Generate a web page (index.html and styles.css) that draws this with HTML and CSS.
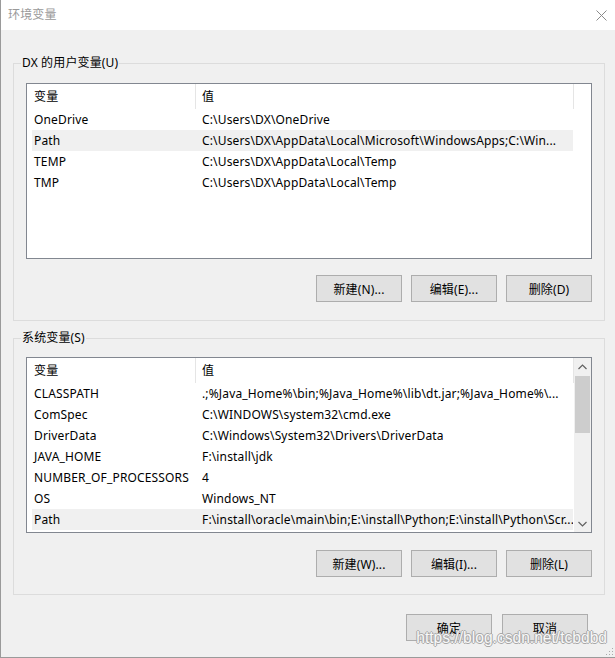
FILE: index.html
```html
<!DOCTYPE html>
<html lang="zh-CN">
<head>
    <meta charset="UTF-8">
    <title>环境变量</title>
    <link rel="stylesheet" href="styles.css">
</head>
<body>

<div class="window">
    <div class="titlebar">
        <span class="title">环境变量</span>
        <svg class="close" width="11" height="11" viewBox="0 0 11 11">
            <path d="M0.5 0.5 L10.5 10.5 M10.5 0.5 L0.5 10.5" stroke="#8a8a8a" stroke-width="1" fill="none"/>
        </svg>
    </div>

    <div class="content">
        <fieldset class="group group-user">
            <legend>DX 的用户变量(U)</legend>
            <div class="list">
                <div class="list-main">
                    <div class="list-head">
                        <div class="head-cell head-name">变量</div>
                        <div class="head-cell head-value">值</div>
                        <div class="head-fill"></div>
                    </div>
                    <div class="rows">
                        <div class="row"><span class="cell-name">OneDrive</span><span class="cell-value">C:\Users\DX\OneDrive</span></div>
                        <div class="row selected"><span class="cell-name">Path</span><span class="cell-value">C:\Users\DX\AppData\Local\Microsoft\WindowsApps;C:\Win...</span></div>
                        <div class="row"><span class="cell-name">TEMP</span><span class="cell-value">C:\Users\DX\AppData\Local\Temp</span></div>
                        <div class="row"><span class="cell-name">TMP</span><span class="cell-value">C:\Users\DX\AppData\Local\Temp</span></div>
                    </div>
                </div>
            </div>
            <div class="buttons">
                <button>新建(N)...</button>
                <button>编辑(E)...</button>
                <button>删除(D)</button>
            </div>
        </fieldset>

        <fieldset class="group group-system">
            <legend>系统变量(S)</legend>
            <div class="list">
                <div class="list-main">
                    <div class="list-head">
                        <div class="head-cell head-name">变量</div>
                        <div class="head-cell head-value">值</div>
                    </div>
                    <div class="rows">
                        <div class="row"><span class="cell-name">CLASSPATH</span><span class="cell-value">.;%Java_Home%\bin;%Java_Home%\lib\dt.jar;%Java_Home%\...</span></div>
                        <div class="row"><span class="cell-name">ComSpec</span><span class="cell-value">C:\WINDOWS\system32\cmd.exe</span></div>
                        <div class="row"><span class="cell-name">DriverData</span><span class="cell-value">C:\Windows\System32\Drivers\DriverData</span></div>
                        <div class="row"><span class="cell-name">JAVA_HOME</span><span class="cell-value">F:\install\jdk</span></div>
                        <div class="row"><span class="cell-name">NUMBER_OF_PROCESSORS</span><span class="cell-value">4</span></div>
                        <div class="row"><span class="cell-name">OS</span><span class="cell-value">Windows_NT</span></div>
                        <div class="row selected"><span class="cell-name">Path</span><span class="cell-value">F:\install\oracle\main\bin;E:\install\Python;E:\install\Python\Scr...</span></div>
                    </div>
                </div>
                <div class="scrollbar">
                    <div class="arrow">
                        <svg width="9" height="6" viewBox="0 0 9 6"><path d="M0.5 5 L4.5 1 L8.5 5" stroke="#606060" stroke-width="1.2" fill="none"/></svg>
                    </div>
                    <div class="track">
                        <div class="thumb"></div>
                    </div>
                    <div class="arrow">
                        <svg width="9" height="6" viewBox="0 0 9 6"><path d="M0.5 1 L4.5 5 L8.5 1" stroke="#606060" stroke-width="1.2" fill="none"/></svg>
                    </div>
                </div>
            </div>
            <div class="buttons">
                <button>新建(W)...</button>
                <button>编辑(I)...</button>
                <button>删除(L)</button>
            </div>
        </fieldset>

        <div class="footer">
            <button>确定</button>
            <button>取消</button>
        </div>
    </div>

    <div class="watermark">https://blog.csdn.net/tcbdbd</div>
    <div class="grip"></div>
</div>

</body>
</html>
```

FILE: styles.css
```css
body {
    margin: 0;
    padding: 0;
    background: #f0f0f0;
    font-family: "Noto Sans", "Noto Sans CJK SC", sans-serif;
    font-size: 12px;
    letter-spacing: 0.15px;
    color: #000;
}

.window {
    position: relative;
    width: 615px;
    height: 658px;
    box-sizing: border-box;
    background: #f0f0f0;
    border-left: 1px solid #9a9a9a;
    border-bottom: 1px solid #9a9a9a;
    overflow: hidden;
}

.titlebar {
    height: 30px;
    background: #fff;
    display: flex;
    align-items: center;
    justify-content: space-between;
    padding: 0 8px 0 7px;
}

.titlebar .title {
    color: #999;
    line-height: 16px;
}

.titlebar .close {
    display: block;
}

.content {
    padding-top: 25px;
}

.group {
    margin: 0 10px 0 12px;
    padding: 12px 12px 18px 12px;
    border: 1px solid #dcdcdc;
    min-width: 0;
}

.group legend {
    margin-left: -5px;
    padding: 0 1px;
    line-height: 16px;
}

.group-system {
    margin-top: 9px;
    padding-top: 11px;
    padding-bottom: 17px;
}

.list {
    height: 176px;
    box-sizing: border-box;
    border: 1px solid #828790;
    background: #fff;
    display: flex;
    overflow: hidden;
}

.list-main {
    flex: 1;
    min-width: 0;
}

.list-head {
    display: flex;
    height: 25px;
}

.head-cell {
    line-height: 25px;
    box-sizing: border-box;
    border-right: 1px solid #e5e5e5;
}

.head-name {
    width: 169px;
    padding-left: 7px;
}

.head-value {
    width: 378px;
    padding-left: 6px;
}

.head-fill {
    flex: 1;
}

.rows {
    width: 541px;
    margin-left: 5px;
}

.row {
    display: flex;
    height: 21px;
    line-height: 21px;
    white-space: nowrap;
}

.row.selected {
    background: #f0f0f0;
}

.cell-name {
    width: 164px;
    box-sizing: border-box;
    padding-left: 2px;
    overflow: hidden;
}

.cell-value {
    flex: 1;
    padding-left: 6px;
    overflow: hidden;
}

.scrollbar {
    width: 17px;
    background: #f0f0f0;
    display: flex;
    flex-direction: column;
}

.scrollbar .arrow {
    height: 17px;
    display: flex;
    align-items: center;
    justify-content: center;
}

.scrollbar .track {
    flex: 1;
    padding: 1px 1px 0 1px;
}

.scrollbar .thumb {
    height: 57px;
    background: #cdcdcd;
}

.buttons {
    display: flex;
    justify-content: flex-end;
    gap: 9px;
    margin-top: 16px;
}

.group-system .buttons {
    margin-top: 17px;
}

button {
    width: 86px;
    height: 27px;
    background: #e1e1e1;
    border: 1px solid #adadad;
    font-family: inherit;
    font-size: 12px;
    letter-spacing: inherit;
    color: #000;
    padding: 0;
}

.footer {
    display: flex;
    justify-content: flex-end;
    gap: 10px;
    margin: 19px 27px 0 0;
}

.watermark {
    position: absolute;
    right: 8px;
    bottom: 10px;
    font-family: "Liberation Sans", Arial, sans-serif;
    font-size: 15.6px;
    letter-spacing: 0;
    color: #f8f8f8;
    text-shadow: 1px 0 0 #a8a8a8, -1px 0 0 #a8a8a8, 0 1px 0 #a8a8a8, 0 -1px 0 #a8a8a8;
}

.grip {
    position: absolute;
    right: 2px;
    bottom: 2px;
    width: 8px;
    height: 8px;
    background: radial-gradient(circle, #aaa 0.8px, transparent 1px) 0 0 / 3px 3px;
    clip-path: polygon(100% 0, 100% 100%, 0 100%);
}
```
